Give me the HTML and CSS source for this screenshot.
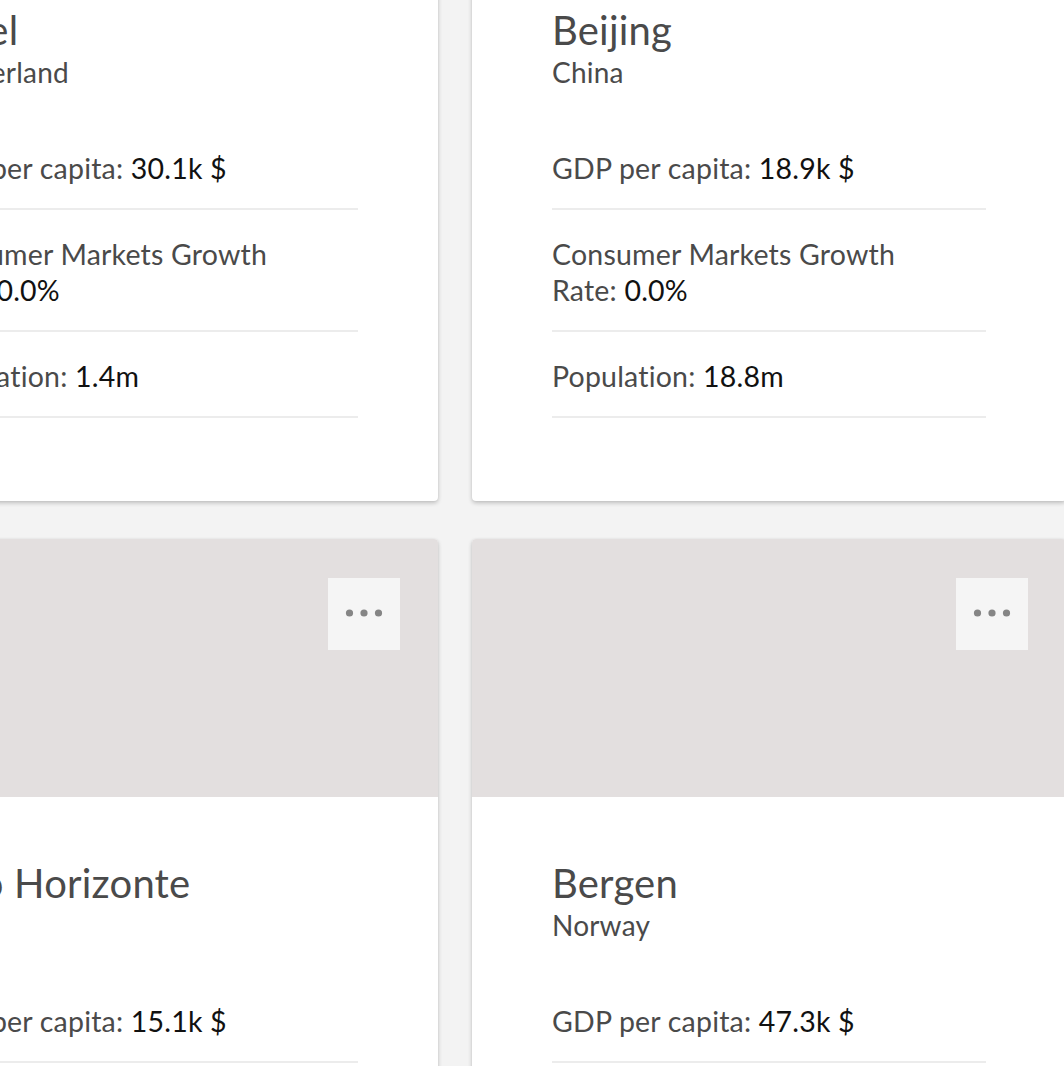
FILE: index.html
```html
<!DOCTYPE html>
<html lang="en">
<head>
<meta charset="utf-8">
<title>Cities</title>
<link rel="stylesheet" href="styles.css">
</head>
<body>
<div class="grid">
  <article class="card">
    <div class="card-media">
      <button class="menu-btn" aria-label="More"><svg width="38" height="8" viewBox="0 0 38 8"><circle cx="4.5" cy="4" r="3.6"/><circle cx="19" cy="4" r="3.6"/><circle cx="33.5" cy="4" r="3.6"/></svg></button>
    </div>
    <div class="card-body">
      <h2 class="city">Basel</h2>
      <p class="country">Switzerland</p>
      <ul class="stats">
        <li>GDP per capita: <span class="val">30.1k $</span></li>
        <li>Consumer Markets Growth<br>Rate: <span class="val">0.0%</span></li>
        <li>Population: <span class="val">1.4m</span></li>
      </ul>
    </div>
  </article>
  <article class="card">
    <div class="card-media">
      <button class="menu-btn" aria-label="More"><svg width="38" height="8" viewBox="0 0 38 8"><circle cx="4.5" cy="4" r="3.6"/><circle cx="19" cy="4" r="3.6"/><circle cx="33.5" cy="4" r="3.6"/></svg></button>
    </div>
    <div class="card-body">
      <h2 class="city">Beijing</h2>
      <p class="country">China</p>
      <ul class="stats">
        <li>GDP per capita: <span class="val">18.9k $</span></li>
        <li>Consumer Markets Growth<br>Rate: <span class="val">0.0%</span></li>
        <li>Population: <span class="val">18.8m</span></li>
      </ul>
    </div>
  </article>
  <article class="card">
    <div class="card-media">
      <button class="menu-btn" aria-label="More"><svg width="38" height="8" viewBox="0 0 38 8"><circle cx="4.5" cy="4" r="3.6"/><circle cx="19" cy="4" r="3.6"/><circle cx="33.5" cy="4" r="3.6"/></svg></button>
    </div>
    <div class="card-body">
      <h2 class="city">Belo Horizonte</h2>
      <p class="country">Brazil</p>
      <ul class="stats">
        <li>GDP per capita: <span class="val">15.1k $</span></li>
        <li>Consumer Markets Growth<br>Rate: <span class="val">0.0%</span></li>
        <li>Population: <span class="val">5.6m</span></li>
      </ul>
    </div>
  </article>
  <article class="card">
    <div class="card-media">
      <button class="menu-btn" aria-label="More"><svg width="38" height="8" viewBox="0 0 38 8"><circle cx="4.5" cy="4" r="3.6"/><circle cx="19" cy="4" r="3.6"/><circle cx="33.5" cy="4" r="3.6"/></svg></button>
    </div>
    <div class="card-body">
      <h2 class="city">Bergen</h2>
      <p class="country">Norway</p>
      <ul class="stats">
        <li>GDP per capita: <span class="val">47.3k $</span></li>
        <li>Consumer Markets Growth<br>Rate: <span class="val">0.0%</span></li>
        <li>Population: <span class="val">0.4m</span></li>
      </ul>
    </div>
  </article>
</div>
</body>
</html>
```

FILE: styles.css
```css
html, body {
  margin: 0;
  padding: 0;
  overflow: hidden;
  background: #f3f3f3;
}
body {
  font-family: Lato, "Open Sans", sans-serif;
  color: #4a4a4a;
  width: 1064px;
  height: 1066px;
}
.grid {
  display: grid;
  grid-template-columns: 594px 594px;
  column-gap: 34px;
  row-gap: 38px;
  margin-left: -156px;
  margin-top: -314px;
}
.card {
  background: #fff;
  border-radius: 4px;
  overflow: hidden;
  box-shadow: 0 2px 4px rgba(0, 0, 0, 0.22), 0 0 2px rgba(0, 0, 0, 0.06);
}
.card-media {
  height: 258px;
  background: #e3dfdf;
  display: flex;
  justify-content: flex-end;
  align-items: flex-start;
  padding: 39px 38px 0 0;
  box-sizing: border-box;
}
.menu-btn {
  width: 72px;
  height: 72px;
  border: 0;
  padding: 0;
  background: #f5f5f5;
  display: flex;
  align-items: center;
  justify-content: center;
}
.menu-btn svg {
  display: block;
  fill: #858585;
  margin-top: -2px;
}
.card-body {
  padding: 62px 80px 83px;
}
.city {
  margin: 0;
  font-weight: 400;
  font-size: 40px;
  line-height: 48px;
  letter-spacing: 0.2px;
  color: #4a4a4a;
}
.country {
  margin: 0;
  font-size: 28px;
  line-height: 36px;
  letter-spacing: 0.2px;
  color: #4a4a4a;
}
.stats {
  list-style: none;
  margin: 34px 0 0;
  padding: 0;
}
.stats li {
  font-size: 28.5px;
  line-height: 36px;
  letter-spacing: 0.2px;
  padding: 26px 0 22px;
  border-bottom: 2px solid #ececec;
}
.val {
  color: #111;
}
```
